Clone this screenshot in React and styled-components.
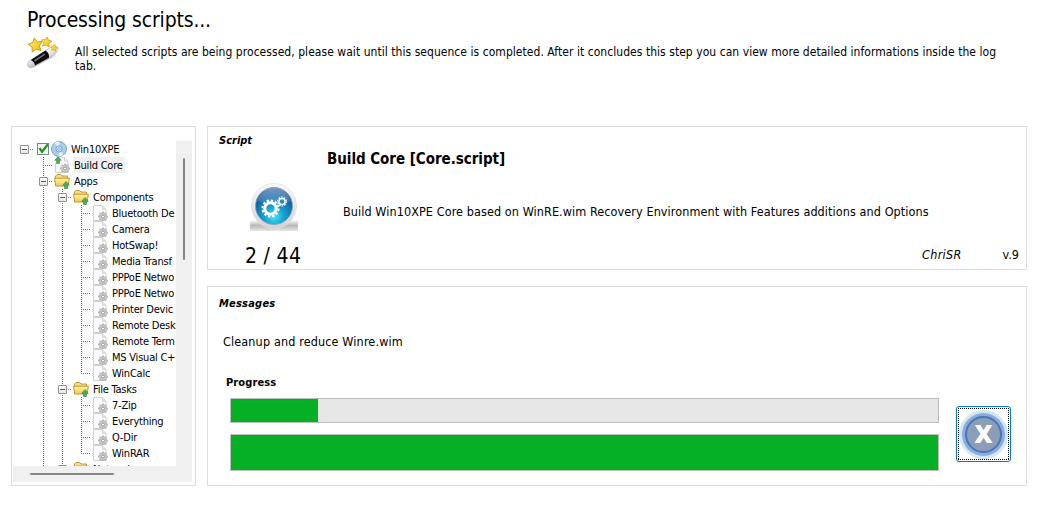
import styled, {createGlobalStyle} from 'styled-components'

const GlobalStyle = createGlobalStyle`
    * {
        box-sizing: border-box;
    }
    body {
        margin: 0;
        background-color: white;
        color: black;
        font-family: "DejaVu Sans Condensed", "DejaVu Sans", Tahoma, sans-serif;
        font-size: 12px;
    }
`
const Page = styled.div`
    width: 1041px;
    height: 510px;
    overflow: hidden;
    background-color: white;
`
const Header = styled.header`
    height: 126px;
    padding: 7px 30px 0 27px;
`
const Title = styled.h1`
    margin: 0;
    font-size: 21px;
    font-weight: normal;
    line-height: 26px;
    letter-spacing: -.16px;
`
const Intro = styled.div`
    display: flex;
    gap: 16px;
    padding-top: 4px;
`
const IntroText = styled.p`
    width: 930px;
    margin: 8px 0 0;
    line-height: 14px;
    letter-spacing: .046px;
`
const Main = styled.main`
    display: grid;
    grid-template-columns: 185px 820px;
    column-gap: 11px;
    height: 360px;
    padding-left: 11px;
`
const Column = styled.div`
    display: grid;
    grid-template-rows: 144px 200px;
    row-gap: 16px;
`
const Panel = styled.section`
    border: 1px solid #dcdcdc;
    background-color: white;
`

const TreePanel = styled(Panel)`
    padding: 14px 3px 3px 1px;
`
const TreeArea = styled.div`
    display: grid;
    grid-template-columns: 163px 16px;
    grid-template-rows: 325px 16px;
`
const Tree = styled.div`
    padding-left: 2px;
    overflow: hidden;
    font-size: 11px;
`
const TreeRow = styled.div`
    display: flex;
    height: 16px;
    white-space: nowrap;
`
const dotsDown = 'repeating-linear-gradient(180deg, #707070 0 1px, transparent 1px 2px)'
const dotsAcross = 'repeating-linear-gradient(90deg, #707070 0 1px, transparent 1px 2px)'
const Blank = styled.span`
    flex: none;
    width: 19px;
`
const Guide = styled(Blank)`
    background: ${dotsDown} 9px 0 / 1px 16px no-repeat;
`
const Joint = styled(Blank)`
    padding: 4px 0 0 5px;
    background:
        ${dotsAcross} 9px 8px / 10px 1px no-repeat,
        ${dotsDown} 9px ${({$root}) => $root ? '16px' : '0'} / 1px ${({$last}) => $last ? '8px' : '16px'} no-repeat;
`
const Expander = styled.span`
    display: flex;
    align-items: center;
    justify-content: center;
    width: 9px;
    height: 9px;
    border: 1px solid #919191;
    border-radius: 1px;
    background: linear-gradient(white, #e6e6e6);

    &::before {
        content: '';
        width: 5px;
        height: 1px;
        background-color: #3c5aa8;
    }
`
const Glyph = styled.span`
    flex: none;
    display: flex;
    width: 16px;
    margin: 0 3px 0 1px;
`
const CheckBox = styled.span`
    flex: none;
    display: flex;
    width: 14px;
    margin: 1px 0 0 2px;
`
const Label = styled.span`
    height: 16px;
    padding: 0 2px 0 1px;
    line-height: 17px;
    letter-spacing: -.22px;
    background-color: ${({$selected}) => $selected ? '#f0f0f0' : 'transparent'};
`
const VerticalBar = styled.div`
    padding: 17px 0 0 7px;
    background-color: #f0f0f0;
`
const HorizontalBar = styled.div`
    grid-column: 1 / 3;
    padding: 7px 0 0 17px;
    background-color: #f0f0f0;
`
const Thumb = styled.div`
    width: ${({$w}) => $w}px;
    height: ${({$h}) => $h}px;
    border-radius: 1px;
    background-color: #868686;
`

const ScriptPanel = styled(Panel)`
    display: grid;
    grid-template-rows: 21px 22px 1fr 28px;
    padding: 0 7px 0 11px;
`
const Legend = styled.h2`
    margin: 0;
    font-size: 11px;
    font-style: italic;
    line-height: 14px;
    letter-spacing: .22px;
`
const ScriptLegend = styled(Legend)`
    padding-top: 7px;
    letter-spacing: 0;
`
const ScriptTitle = styled.h3`
    margin: 0;
    padding: 1px 0 0 108px;
    font-size: 15px;
    line-height: 20px;
    letter-spacing: -.04px;
`
const ScriptBody = styled.div`
    display: grid;
    grid-template-columns: 124px 1fr;
    padding-top: 13px;
`
const OrbHolder = styled.div`
    padding-left: 31px;
`
const Description = styled.p`
    margin: 21px 0 0;
    font-size: 12.5px;
    line-height: 16px;
    letter-spacing: .09px;
`
const ScriptFooter = styled.div`
    display: flex;
    align-items: flex-start;
    padding-left: 26px;
`
const Counter = styled.span`
    padding-top: 2px;
    font-size: 21px;
    line-height: 26px;
    letter-spacing: .3px;
`
const Author = styled.span`
    margin: 7px 41px 0 auto;
    font-size: 12.5px;
    font-style: italic;
    line-height: 14px;
    letter-spacing: .3px;
`
const Version = styled.span`
    margin-top: 7px;
    font-size: 12.5px;
    line-height: 14px;
`

const MessagesPanel = styled(Panel)`
    padding: 10px 15px 0 11px;
`
const Message = styled.p`
    margin: 23px 0 0 4px;
    font-size: 12.5px;
    line-height: 16px;
    letter-spacing: .14px;
`
const ProgressTitle = styled.h3`
    margin: 25px 0 0 7px;
    font-size: 11px;
    line-height: 16px;
    letter-spacing: .1px;
`
const ProgressRow = styled.div`
    display: flex;
    justify-content: space-between;
    padding: 7px 0 0 11px;
`
const Bars = styled.div`
    display: flex;
    flex-direction: column;
    gap: 11px;
    width: 709px;
`
const Bar = styled.div`
    height: ${({$tall}) => $tall ? 37 : 25}px;
    border: 1px solid #bcbcbc;
    background-color: #e6e6e6;
`
const Fill = styled.div`
    height: 100%;
    background-color: #06b025;
`
const CancelButton = styled.button`
    display: flex;
    width: 55px;
    height: 56px;
    margin-top: 8px;
    padding: 1px;
    border: 1px solid #0078d7;
    border-radius: 3px;
    background-color: white;
`
const FocusRing = styled.span`
    flex: 1;
    display: flex;
    align-items: center;
    justify-content: center;
    border: 1px solid transparent;
    background:
        repeating-linear-gradient(90deg, black 0 1px, transparent 1px 2px) 0 0 / 100% 1px no-repeat border-box,
        repeating-linear-gradient(90deg, black 0 1px, transparent 1px 2px) 0 100% / 100% 1px no-repeat border-box,
        repeating-linear-gradient(180deg, black 0 1px, transparent 1px 2px) 0 0 / 1px 100% no-repeat border-box,
        repeating-linear-gradient(180deg, black 0 1px, transparent 1px 2px) 100% 0 / 1px 100% no-repeat border-box;
`
const Disc = styled.span`
    display: flex;
    align-items: center;
    justify-content: center;
    width: 37px;
    height: 37px;
    border: 2px solid #4577be;
    border-radius: 50%;
    background-color: #8c9db9;
    box-shadow: 0 0 0 3px #8eabdb, 0 0 0 6px #d0e8f1;
    color: white;
    font-family: "Open Sans", sans-serif;
    font-size: 25px;
    font-weight: 800;
    line-height: 33px;
`
const Cross = styled.span`
    margin-top: -2px;
`

// outline of a cog wheel, alternating between the two radii
const gearPath = (cx, cy, outer, inner, teeth) => {
    const points = []
    for (let i = 0; i < teeth; i++) {
        const steps = [[-.3, inner], [-.2, outer], [.2, outer], [.3, inner]]
        steps.forEach(([shift, r]) => {
            const a = (i + shift) / teeth * Math.PI * 2
            points.push(`${(cx + r * Math.cos(a)).toFixed(2)} ${(cy + r * Math.sin(a)).toFixed(2)}`)
        })
    }
    return `M${points.join('L')}Z`
}

const UpArrow = ({x, y}) => (
    <path transform={`translate(${x} ${y})`} d="M4 .5L7.2 4.3H5.5V7.5H2.5V4.3H.8Z" fill="#4fae55" stroke="#2f8a3a" strokeWidth=".6"/>
)

const FileIcon = ({arrow}) => (
    <svg width="16" height="16" viewBox="0 0 16 16">
        <path d="M1.5 .5H10.5L14 4V15.5H1.5Z" fill="#fafafa" stroke="#d0d0d0"/>
        <path d="M10.5 .5V4H14" fill="#eee" stroke="#d0d0d0"/>
        <path d={gearPath(11, 11.5, 4.5, 3.4, 8)} fill="#cfcfcf" stroke="#959595" strokeWidth=".6"/>
        <circle cx="11" cy="11.500" r="1.500" fill="#f6f6f6" stroke="#858585" strokeWidth=".8"/>
        {arrow && <rect width="8" height="6" fill="white"/>}
        {arrow && <UpArrow x={0} y={-1}/>}
    </svg>
)

const FolderIcon = () => (
    <svg width="16" height="16" viewBox="0 0 16 16">
        <defs>
            <linearGradient id="folder" x1="0" y1="0" x2="0" y2="1">
                <stop offset="0" stopColor="#fff5b0"/>
                <stop offset="1" stopColor="#f3c548"/>
            </linearGradient>
        </defs>
        <path d="M1.5 12.5V3L3 1.5H6.500L8 3H13.5V5.5" fill="#f8dc80" stroke="#c19634"/>
        <path d="M1.5 12.500L.6 5.2H15.4L14 13H1.500Z" fill="url(#folder)" stroke="#c19634"/>
        <UpArrow x={8} y={8}/>
    </svg>
)

const DiscIcon = () => (
    <svg width="16" height="16" viewBox="0 0 16 16">
        <circle cx="8" cy="8" r="7.5" fill="#a9cdea" stroke="#6d9fcd" strokeWidth=".9"/>
        <path d="M8 8L3.5 2A7.5 7.5 0 0 1 8.5 .8ZM8 8L12.5 14A7.5 7.5 0 0 1 7.5 15.2Z" fill="#e3f2fc"/>
        <circle cx="8" cy="8" r="3.1" fill="#dceefa" stroke="#6a9cd0" strokeWidth=".9"/>
        <circle cx="8" cy="8" r="1.3" fill="white" stroke="#5f8dc2" strokeWidth=".7"/>
    </svg>
)

const CheckIcon = () => (
    <svg width="14" height="14" viewBox="0 0 14 14">
        <rect x="1.5" y="1.5" width="11" height="11" fill="#f7f7f7" stroke="#7a8794"/>
        <path d="M3.5 6L6 9.8L12 2.2" fill="none" stroke="#179a17" strokeWidth="2.2"/>
    </svg>
)

const star = 'M0 -6L1.9 -2.3L6 -1.8L3.1 1.2L3.8 5.3L0 3.5L-3.8 5.3L-3.1 1.2L-6 -1.8L-1.9 -2.3Z'

const WandIcon = () => (
    <svg width="32" height="32" viewBox="0 0 32 32">
        <defs>
            <linearGradient id="gold" x1="0" y1="0" x2="1" y2="1">
                <stop offset="0" stopColor="#fff07a"/>
                <stop offset="1" stopColor="#f0b800"/>
            </linearGradient>
            <linearGradient id="silver" x1="0" y1="0" x2=".6" y2="1">
                <stop offset="0" stopColor="#fff"/>
                <stop offset=".5" stopColor="#f0f0f0"/>
                <stop offset="1" stopColor="#999"/>
            </linearGradient>
        </defs>
        <path d="M5 30L28 18" stroke="#bbb" strokeWidth="3" opacity=".4"/>
        <path d="M1.5 24.5L20 12.5L26 9Q30 8 31 11Q31 14 28 17L23 21L5 30.5Q1 31.5 .5 27.5Z" fill="url(#silver)" stroke="#ababab" strokeWidth=".6"/>
        <path d="M3.800 23L18.500 13.500Q22.500 16 22 20.800L8 28.500Q7.500 24.800 3.800 23Z" fill="#0c0c0c"/>
        <path d="M7 23.300L17.500 16.400L18.500 17.600L8 24.600Z" fill="#777"/>
        <g fill="url(#gold)" stroke="#c8930c" strokeWidth=".7">
            <path transform="translate(8.5 8) rotate(-10) scale(1.2)" d={star}/>
            <path transform="translate(19.5 5) rotate(8) scale(.88)" d={star}/>
            <path transform="translate(27 10.8) rotate(14) scale(.6)" d={star}/>
        </g>
    </svg>
)

const OrbIcon = () => (
    <svg width="48" height="48" viewBox="0 0 48 48">
        <defs>
            <radialGradient id="orb" cx=".5" cy=".78" r=".75">
                <stop offset="0" stopColor="#3fe6f7"/>
                <stop offset=".35" stopColor="#16a3d4"/>
                <stop offset=".8" stopColor="#105fa3"/>
                <stop offset="1" stopColor="#0d4584"/>
            </radialGradient>
            <linearGradient id="rim" x1="0" y1="0" x2="0" y2="1">
                <stop offset="0" stopColor="#fafafa"/>
                <stop offset="1" stopColor="#d3d3d3"/>
            </linearGradient>
            <linearGradient id="shine" x1="0" y1="0" x2="0" y2="1">
                <stop offset="0" stopColor="#fff" stopOpacity=".75"/>
                <stop offset="1" stopColor="#fff" stopOpacity=".1"/>
            </linearGradient>
            <linearGradient id="shade" x1="0" y1="0" x2="0" y2="1">
                <stop offset="0" stopColor="#999" stopOpacity="0"/>
                <stop offset=".5" stopColor="#999"/>
                <stop offset="1" stopColor="#ddd"/>
            </linearGradient>
        </defs>
        <rect y="37" width="48" height="11" fill="url(#shade)" opacity=".7"/>
        <circle cx="24" cy="23" r="22.500" fill="url(#rim)" stroke="#dedede" strokeWidth=".8"/>
        <circle cx="24" cy="23" r="18.500" fill="url(#orb)" stroke="#7f9db5" strokeWidth=".8"/>
        <path d="M7 18A17.5 17.5 0 0 1 41 18Q34 23 24 21Q14 20 7 18Z" fill="url(#shine)" opacity=".6"/>
        <g fill="none" stroke="white">
            <circle cx="20.5" cy="25.500" r="5.700" strokeWidth="3"/>
            <circle cx="20.5" cy="25.500" r="8" strokeWidth="2.200" strokeDasharray="2.400 1.789"/>
            <circle cx="32" cy="18.500" r="3.100" strokeWidth="1.500"/>
            <circle cx="32" cy="18.500" r="4.300" strokeWidth="1.300" strokeDasharray="1.500 1.202"/>
        </g>
    </svg>
)

const tree = [
    {label: 'Win10XPE', depth: 0, icon: 'disc', open: true},
    {label: 'Build Core', depth: 1, icon: 'core', selected: true},
    {label: 'Apps', depth: 1, icon: 'folder', open: true},
    {label: 'Components', depth: 2, icon: 'folder', open: true},
    {label: 'Bluetooth De', depth: 3},
    {label: 'Camera', depth: 3},
    {label: 'HotSwap!', depth: 3},
    {label: 'Media Transf', depth: 3},
    {label: 'PPPoE Netwo', depth: 3},
    {label: 'PPPoE Netwo', depth: 3},
    {label: 'Printer Devic', depth: 3},
    {label: 'Remote Desk', depth: 3},
    {label: 'Remote Term', depth: 3},
    {label: 'MS Visual C+', depth: 3},
    {label: 'WinCalc', depth: 3, last: true},
    {label: 'File Tasks', depth: 2, icon: 'folder', open: true},
    {label: '7-Zip', depth: 3},
    {label: 'Everything', depth: 3},
    {label: 'Q-Dir', depth: 3},
    {label: 'WinRAR', depth: 3, last: true},
    {label: 'Network', depth: 2, icon: 'folder', open: true},
]

const icons = {
    disc: <DiscIcon/>,
    core: <FileIcon arrow/>,
    folder: <FolderIcon/>,
    file: <FileIcon/>,
}

const TreeItem = ({label, depth, icon = 'file', open, last, selected}) => (
    <TreeRow>
        {depth > 0 && <Blank/>}
        {depth > 1 && <Guide/>}
        {depth > 2 && <Guide/>}
        <Joint $root={depth === 0} $last={last}>{open && <Expander/>}</Joint>
        {depth === 0 && <CheckBox><CheckIcon/></CheckBox>}
        <Glyph>{icons[icon]}</Glyph>
        <Label $selected={selected}>{label}</Label>
    </TreeRow>
)

const App = () => {
    return (
        <Page>
            <GlobalStyle/>
            <Header>
                <Title>Processing scripts...</Title>
                <Intro>
                    <WandIcon/>
                    <IntroText>All selected scripts are being processed, please wait until this sequence is completed. After it concludes this step you can view more detailed informations inside the log tab.</IntroText>
                </Intro>
            </Header>
            <Main>
                <TreePanel>
                    <TreeArea>
                        <Tree>
                            {tree.map((item, i) => <TreeItem key={i} {...item}/>)}
                        </Tree>
                        <VerticalBar><Thumb $w={2} $h={102}/></VerticalBar>
                        <HorizontalBar><Thumb $w={84} $h={2}/></HorizontalBar>
                    </TreeArea>
                </TreePanel>
                <Column>
                    <ScriptPanel>
                        <ScriptLegend>Script</ScriptLegend>
                        <ScriptTitle>Build Core [Core.script]</ScriptTitle>
                        <ScriptBody>
                            <OrbHolder><OrbIcon/></OrbHolder>
                            <Description>Build Win10XPE Core based on WinRE.wim Recovery Environment with Features additions and Options</Description>
                        </ScriptBody>
                        <ScriptFooter>
                            <Counter>2 / 44</Counter>
                            <Author>ChriSR</Author>
                            <Version>v.9</Version>
                        </ScriptFooter>
                    </ScriptPanel>
                    <MessagesPanel>
                        <Legend>Messages</Legend>
                        <Message>Cleanup and reduce Winre.wim</Message>
                        <ProgressTitle>Progress</ProgressTitle>
                        <ProgressRow>
                            <Bars>
                                <Bar><Fill style={{width: `${87 / 707 * 100}%`}}/></Bar>
                                <Bar $tall><Fill style={{width: '100%'}}/></Bar>
                            </Bars>
                            <CancelButton><FocusRing><Disc><Cross>X</Cross></Disc></FocusRing></CancelButton>
                        </ProgressRow>
                    </MessagesPanel>
                </Column>
            </Main>
        </Page>
    )
}

export default App
